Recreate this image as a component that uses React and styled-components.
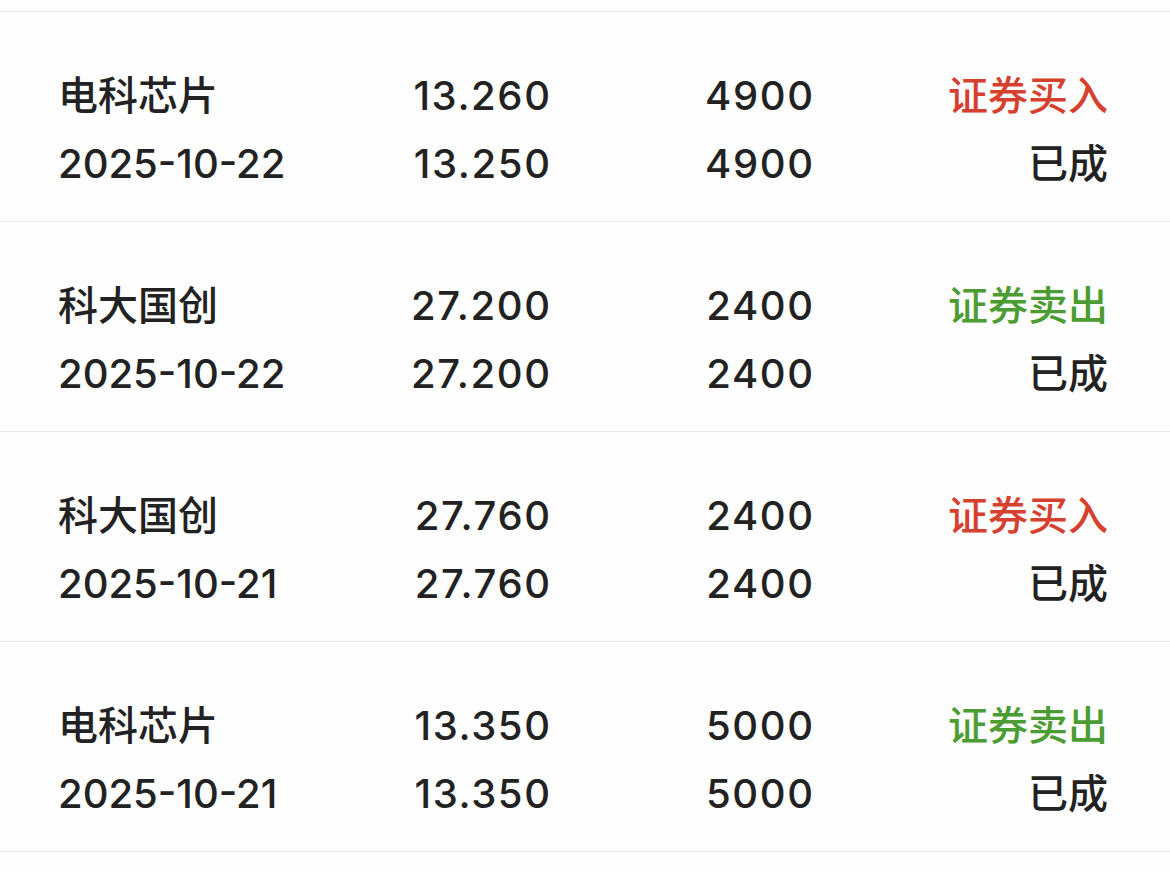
import React from 'react';
import styled, { createGlobalStyle } from 'styled-components';

const GlobalStyle = createGlobalStyle`
  html, body {
    margin: 0;
    padding: 0;
    background: #fdfdfd;
  }
  body {
    font-family: Inter, "Noto Sans CJK SC", sans-serif;
    color: #222222;
  }
`;

const List = styled.div`
  display: flex;
  flex-direction: column;
  width: 1170px;
`;

const TopEdge = styled.div`
  height: 11px;
  border-bottom: 1px solid #ebebeb;
`;

const Row = styled.div`
  display: grid;
  grid-template-columns: 1fr 160px 263px 295px;
  grid-template-rows: 68px 68px;
  padding: 50px 62px 23px 58px;
  border-bottom: 1px solid #ebebeb;
  font-size: 40px;
  font-weight: 500;
  line-height: 68px;
`;

const Cell = styled.div`
  text-align: ${(p) => (p.$left ? 'left' : 'right')};
  white-space: nowrap;
  color: ${(p) => p.$color || '#222222'};
`;

const NumCell = styled(Cell)`
  letter-spacing: 1.6px;
  margin-right: -1.6px;
`;

const CjkCell = styled(Cell)`
  font-family: "Noto Sans CJK SC", sans-serif;
  font-weight: 500;
  font-size: 40px;
  line-height: 63px;
`;

const RED = '#d6402f';
const GREEN = '#4b9c32';

const trades = [
  { name: '电科芯片', date: '2025-10-22', price: '13.260', dealPrice: '13.250', qty: '4900', dealQty: '4900', side: '证券买入', color: RED },
  { name: '科大国创', date: '2025-10-22', price: '27.200', dealPrice: '27.200', qty: '2400', dealQty: '2400', side: '证券卖出', color: GREEN },
  { name: '科大国创', date: '2025-10-21', price: '27.760', dealPrice: '27.760', qty: '2400', dealQty: '2400', side: '证券买入', color: RED },
  { name: '电科芯片', date: '2025-10-21', price: '13.350', dealPrice: '13.350', qty: '5000', dealQty: '5000', side: '证券卖出', color: GREEN },
];

function TradeRow({ t }) {
  return (
    <Row>
      <CjkCell $left>{t.name}</CjkCell>
      <NumCell>{t.price}</NumCell>
      <NumCell>{t.qty}</NumCell>
      <CjkCell $color={t.color}>{t.side}</CjkCell>
      <Cell $left>{t.date}</Cell>
      <NumCell>{t.dealPrice}</NumCell>
      <NumCell>{t.dealQty}</NumCell>
      <CjkCell>已成</CjkCell>
    </Row>
  );
}

export default function App() {
  return (
    <>
      <GlobalStyle />
      <List>
        <TopEdge />
        {trades.map((t, i) => (
          <TradeRow key={i} t={t} />
        ))}
      </List>
    </>
  );
}
